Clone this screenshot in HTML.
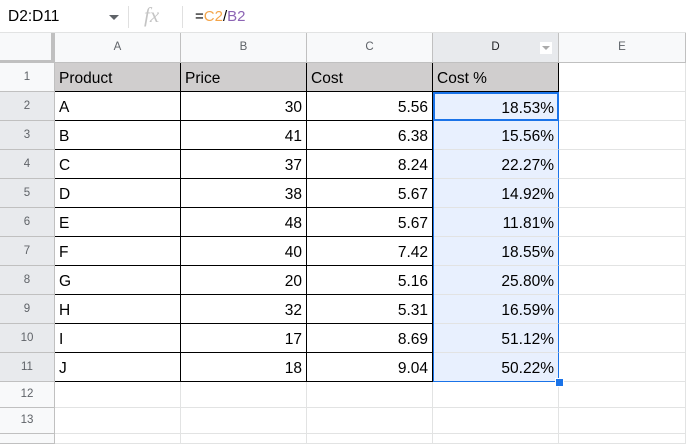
<!DOCTYPE html><html><head><style>
body{margin:0;width:686px;height:439px;overflow:hidden;background:#fff;font-family:"Liberation Sans",Arial,sans-serif;position:relative}
.fb{position:absolute;left:0;top:0;width:686px;height:33px;border-bottom:1px solid #e2e3e3;box-sizing:border-box;background:#fff}
.g{position:absolute;left:0;top:33px;display:grid;grid-template-columns:55px 126px 126px 126px 126px 127px;grid-template-rows:30px repeat(11,29px) 26px 26px 10px}
.g div{box-sizing:border-box;border-right:1px solid #e2e3e3;border-bottom:1px solid #e2e3e3;font-size:15.5px;color:#000;padding:2px 4px 0;line-height:28px;white-space:nowrap;overflow:hidden}
.g .h{background:#f8f9fa;color:#5f6368;font-size:11.5px;text-align:center;line-height:29px;border-color:#c0c0c0;padding:0}
.g .hs{background:#e8eaed;color:#202124}
.g .rh{background:#f8f9fa;color:#5f6368;font-size:11.5px;text-align:center;border-color:#c0c0c0;padding:0}
.g .rs{background:#e8eaed}
.g .t{background:#d0cece}
.g .r{text-align:right}
.g .b{border-right:1px solid #000;border-bottom:1px solid #000}
.g .s{background:#e8f0fe;border-right:1px solid #1a73e8}
</style></head><body>
<div class="fb">
<div style="position:absolute;left:8px;top:8px;font-size:15.5px;color:#000">D2:D11</div>
<div style="position:absolute;left:109px;top:15px;width:0;height:0;border-left:5px solid transparent;border-right:5px solid transparent;border-top:5px solid #5f6368"></div>
<div style="position:absolute;left:128px;top:6px;width:1px;height:22px;background:#e0e0e0"></div>
<div style="position:absolute;left:144px;top:3px;font-size:21px;font-style:italic;color:#c4c4c4;font-family:'Liberation Serif',serif">fx</div>
<div style="position:absolute;left:182px;top:6px;width:1px;height:22px;background:#e0e0e0"></div>
<div style="position:absolute;left:195px;top:8px;font-size:15px;color:#000">=<span style="color:#f4a54a">C2</span>/<span style="color:#8c64b4">B2</span></div>
</div>
<div class="g">
<div class="h" style="border-right:4px solid #c0c0c0;border-bottom:3px solid #c0c0c0;background:#f8f9fa"></div><div class="h">A</div><div class="h">B</div><div class="h">C</div><div class="h hs" style="position:relative">D<span style="position:absolute;right:6px;top:9px;width:12px;height:12px;background:#fff"><span style="position:absolute;left:2px;top:4px;border-left:4px solid transparent;border-right:4px solid transparent;border-top:4px solid #aaa"></span></span></div><div class="h">E</div>
<div class="rh">1</div><div class="t b">Product</div><div class="t b">Price</div><div class="t b">Cost</div><div class="t b">Cost %</div><div></div>
<div class="rh rs">2</div><div class="b">A</div><div class="b r">30</div><div class="b r">5.56</div><div class="b r s" style="border:2px solid #1a73e8;padding:1px 3px 0">18.53%</div><div></div>
<div class="rh rs">3</div><div class="b">B</div><div class="b r">41</div><div class="b r">6.38</div><div class="r s">15.56%</div><div></div>
<div class="rh rs">4</div><div class="b">C</div><div class="b r">37</div><div class="b r">8.24</div><div class="r s">22.27%</div><div></div>
<div class="rh rs">5</div><div class="b">D</div><div class="b r">38</div><div class="b r">5.67</div><div class="r s">14.92%</div><div></div>
<div class="rh rs">6</div><div class="b">E</div><div class="b r">48</div><div class="b r">5.67</div><div class="r s">11.81%</div><div></div>
<div class="rh rs">7</div><div class="b">F</div><div class="b r">40</div><div class="b r">7.42</div><div class="r s">18.55%</div><div></div>
<div class="rh rs">8</div><div class="b">G</div><div class="b r">20</div><div class="b r">5.16</div><div class="r s">25.80%</div><div></div>
<div class="rh rs">9</div><div class="b">H</div><div class="b r">32</div><div class="b r">5.31</div><div class="r s">16.59%</div><div></div>
<div class="rh rs">10</div><div class="b">I</div><div class="b r">17</div><div class="b r">8.69</div><div class="r s">51.12%</div><div></div>
<div class="rh rs">11</div><div class="b">J</div><div class="b r">18</div><div class="b r">9.04</div><div class="r s" style="border-bottom:1px solid #1a73e8">50.22%</div><div></div>
<div class="rh" style="line-height:25px">12</div><div></div><div></div><div></div><div></div><div></div>
<div class="rh" style="line-height:25px">13</div><div></div><div></div><div></div><div></div><div></div>
<div class="rh"></div><div></div><div></div><div></div><div></div><div></div>
</div>
<div style="position:absolute;left:555px;top:378px;width:7px;height:7px;background:#1a73e8;border:1px solid #fff"></div>
<div style="position:absolute;left:433px;top:121px;width:1px;height:261px;background:#1a73e8"></div>
</body></html>
